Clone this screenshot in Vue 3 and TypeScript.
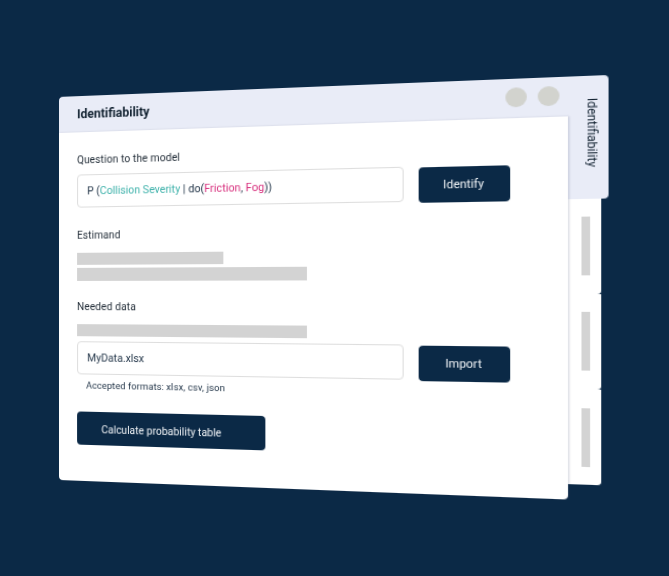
<script setup lang="ts">
const sideCards: number[] = [1, 2, 3]
</script>

<template>
  <div class="stage">
    <div class="scene">
      <div class="main">
        <header class="head">
          <h1 class="title">Identifiability</h1>
          <div class="dots"><span class="dot"></span><span class="dot"></span></div>
        </header>
        <section class="panel">
          <label class="label first">Question to the model</label>
          <div class="row">
            <div class="field">P (<span class="teal">Collision Severity</span> | do(<span class="pink">Friction</span>, <span class="pink">Fog</span>))</div>
            <button class="btn">Identify</button>
          </div>
          <label class="label estimand">Estimand</label>
          <div class="bar short"></div>
          <div class="bar long gap"></div>
          <label class="label needed">Needed data</label>
          <div class="bar long"></div>
          <div class="row tight">
            <div class="field">MyData.xlsx</div>
            <button class="btn">Import</button>
          </div>
          <p class="hint">Accepted formats: xlsx, csv, json</p>
          <button class="btn calc">Calculate probability table</button>
        </section>
      </div>
      <aside class="side">
        <div class="tab"><span class="tab-text">Identifiability</span></div>
        <div v-for="c in sideCards" :key="c" class="card"><span class="card-bar"></span></div>
      </aside>
    </div>
  </div>
</template>

<style>
html, body { margin: 0; background: #0b2946; }
</style>

<style scoped>
.stage {
  width: 669px;
  height: 576px;
  box-sizing: border-box;
  padding: 97px 0 0 59px;
  overflow: hidden;
  background: #0b2946;
  font-family: Roboto, "Liberation Sans", sans-serif;
}
.scene {
  display: flex;
  width: 494px;
  height: 383px;
  transform-origin: 0 0;
  transform: matrix3d(1, -0.04, 0, -0.0002047, 0, 1, 0, 0, 0, 0, 1, 0, 0, 0, 0, 1);
}
.main {
  position: relative;
  z-index: 1;
  display: flex;
  flex-direction: column;
  width: 461px;
  flex: none;
}
.head {
  display: flex;
  align-items: center;
  justify-content: space-between;
  height: 36px;
  box-sizing: border-box;
  padding: 0 7.5px 1px 18px;
  background: #e9ecf7;
  border-radius: 4px 0 0 0;
}
.title {
  margin: 0;
  font-size: 12px;
  font-weight: 700;
  color: #10202f;
}
.dots { display: flex; gap: 8.5px; margin-bottom: 2px; }
.dot {
  width: 18px;
  height: 18px;
  border-radius: 50%;
  background: #d2d3ce;
}
.panel {
  flex: 1;
  display: flex;
  flex-direction: column;
  align-items: flex-start;
  padding: 0 0 0 18px;
  background: #fff;
  border-radius: 0 0 4px 4px;
  box-shadow: 1px 0 2px rgba(40, 50, 90, 0.2);
}
.label {
  font-size: 10px;
  line-height: 14px;
  color: #1d2833;
  letter-spacing: 0.1px;
}
.first { margin-top: 21px; }
.row { display: flex; gap: 12.5px; margin-top: 6.5px; }
.row.tight { margin-top: 4.5px; }
.row .btn { margin-top: 1px; }
.field {
  width: 304px;
  height: 33px;
  box-sizing: border-box;
  padding: 0 9px;
  border: 1px solid #dedede;
  border-radius: 4px;
  font-size: 10.25px;
  line-height: 31px;
  color: #1d3044;
  background: #fff;
}
.teal { color: #3fb2ab; }
.pink { color: #d8327f; }
.btn {
  width: 78px;
  height: 33px;
  padding: 0;
  border: 0;
  border-radius: 4px;
  background: #0b2946;
  color: #f2f5f8;
  font: 400 10.5px Roboto, "Liberation Sans", sans-serif;
}
.estimand { margin-top: 20.5px; }
.bar { height: 12.5px; background: #d3d3d3; }
.short { width: 141px; margin-top: 9.5px; }
.long { width: 218px; }
.gap { margin-top: 3px; }
.needed { margin-top: 19px; }
.needed + .bar { margin-top: 10px; }
.hint {
  margin: 3.5px 0 0 9px;
  font-size: 9px;
  line-height: 14px;
  color: #1d3044;
  letter-spacing: 0.1px;
}
.calc {
  width: 180px;
  margin-top: 19px;
  padding: 2px 0 0 24px;
  text-align: left;
  font-size: 10px;
}
.side {
  display: flex;
  flex-direction: column;
  width: 33px;
  flex: none;
}
.tab {
  display: flex;
  justify-content: center;
  height: 110.5px;
  box-sizing: border-box;
  padding: 20px 0 0 5px;
  background: #e9ecf7;
  border-radius: 0 4px 4px 0;
}
.tab-text {
  writing-mode: vertical-rl;
  font-size: 11px;
  color: #10202f;
}
.card {
  display: flex;
  align-items: center;
  justify-content: flex-end;
  width: 27px;
  height: 86.3px;
  box-sizing: border-box;
  padding: 0 9px 0 0;
  background: #fff;
  border-radius: 0 0 3px 0;
}
.card-bar { width: 7.3px; height: 53px; background: #d3d3d3; }
</style>
